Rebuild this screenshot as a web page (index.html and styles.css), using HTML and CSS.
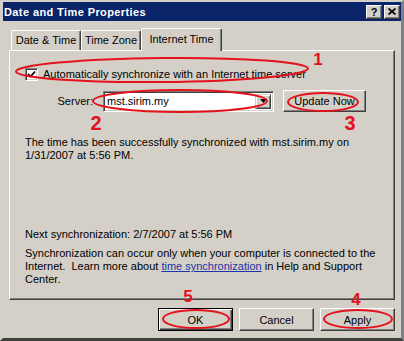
FILE: index.html
```html
<!DOCTYPE html>
<html lang="en">
<head>
    <meta charset="UTF-8">
    <meta name="viewport" content="width=device-width, initial-scale=1.0">
    <title>Date and Time Properties</title>
    <link rel="stylesheet" href="styles.css">
</head>
<body>

    <div class="window">
        <div class="titlebar">
            <span class="title">Date and Time Properties</span>
            <div class="caption-buttons">
                <span class="caption-btn help">?</span>
                <span class="caption-btn">
                    <svg width="8" height="7" viewBox="0 0 8 7"><path d="M0.5 0.5 L7.5 6.5 M7.5 0.5 L0.5 6.5" stroke="#000" stroke-width="1.7"/></svg>
                </span>
            </div>
        </div>

        <div class="content">
            <div class="tabs">
                <div class="tab tab-date">Date &amp; Time</div>
                <div class="tab tab-zone">Time Zone</div>
                <div class="tab tab-internet active">Internet Time</div>
            </div>

            <div class="panel">
                <label class="check-row">
                    <span class="checkbox">
                        <svg width="9" height="9" viewBox="0 0 9 9"><path d="M1 4 L3.5 6.5 L8 1.5" fill="none" stroke="#000" stroke-width="1.8"/></svg>
                    </span>
                    Automatically synchronize with an Internet time server
                </label>

                <div class="server-row">
                    <span class="server-label">Server:</span>
                    <div class="combo">
                        <span class="combo-text">mst.sirim.my</span>
                        <span class="combo-arrow">
                            <svg width="7" height="4" viewBox="0 0 7 4"><path d="M0 0 L7 0 L3.5 4 Z" fill="#000"/></svg>
                        </span>
                    </div>
                    <button type="button" class="btn update-btn">Update Now</button>
                </div>

                <p class="status">The time has been successfully synchronized with mst.sirim.my on<br>1/31/2007 at 5:56 PM.</p>

                <p class="next-sync">Next synchronization: 2/7/2007 at 5:56 PM</p>

                <p class="note">Synchronization can occur only when your computer is connected to the<br>Internet.&nbsp; Learn more about <a href="#" class="link">time synchronization</a> in Help and Support<br>Center.</p>
            </div>

            <div class="actions">
                <button type="button" class="btn default-btn">OK</button>
                <button type="button" class="btn">Cancel</button>
                <button type="button" class="btn">Apply</button>
            </div>
        </div>

        <!-- red annotation marks drawn over the dialog -->
        <svg class="marks" width="404" height="341" viewBox="0 0 404 341">
            <g fill="none" stroke="#e3121b" stroke-width="2">
                <ellipse cx="162" cy="70" rx="146" ry="12" transform="rotate(-0.6 162 70)"/>
                <ellipse cx="180" cy="101" rx="87" ry="11"/>
                <ellipse cx="323" cy="102" rx="35" ry="9"/>
                <ellipse cx="196" cy="319" rx="33" ry="9"/>
                <ellipse cx="358" cy="319" rx="34" ry="9"/>
            </g>
            <g fill="#e3121b" font-family="Liberation Sans, Arial, sans-serif" font-weight="700" text-anchor="middle">
                <text x="318" y="65" font-size="17">1</text>
                <text x="96" y="130" font-size="20">2</text>
                <text x="350" y="130" font-size="20">3</text>
                <text x="356" y="305" font-size="17">4</text>
                <text x="188" y="302" font-size="17">5</text>
            </g>
        </svg>
    </div>

</body>
</html>
```

FILE: styles.css
```css
body {
    margin: 0;
    background-color: #d4d0c8;
    font-family: "Liberation Sans", Arial, sans-serif;
    font-size: 11px;
    color: #000;
}
.window {
    position: relative;
    width: 404px;
    height: 341px;
    box-sizing: border-box;
    background-color: #d4d0c8;
    border-style: solid;
    border-width: 2px 3px 3px 3px;
    border-color: #d4d0c8 #808080 #404040 #d4d0c8;
    display: flex;
    flex-direction: column;
}
.titlebar {
    height: 19px;
    background-color: #0a246a;
    display: flex;
    align-items: center;
    justify-content: space-between;
    padding: 0 1px 0 1px;
}
.title {
    color: #fff;
    font-weight: bold;
    font-size: 11px;
    letter-spacing: 0.4px;
}
.caption-buttons {
    display: flex;
    gap: 2px;
}
.caption-btn {
    width: 16px;
    height: 14px;
    box-sizing: border-box;
    background-color: #d4d0c8;
    border: 1px solid;
    border-color: #fff #404040 #404040 #fff;
    box-shadow: inset -1px -1px #808080;
    display: flex;
    align-items: center;
    justify-content: center;
    font-weight: bold;
    font-size: 11px;
    line-height: 12px;
}
.content {
    flex: 1;
    display: flex;
    flex-direction: column;
    padding: 7px 6px 7px 6px;
}
.tabs {
    display: flex;
    height: 22px;
    padding-left: 2px;
    position: relative;
    z-index: 1;
}
.tab {
    box-sizing: border-box;
    height: 20px;
    margin-top: 2px;
    border: 1px solid;
    border-bottom: none;
    border-color: #fff #404040 transparent #fff;
    box-shadow: inset -1px 0 #808080;
    border-radius: 2px 2px 0 0;
    text-align: center;
    line-height: 18px;
}
.tab-date {
    width: 70px;
}
.tab-zone {
    width: 60px;
}
.tab-internet {
    width: 81px;
}
.tab.active {
    height: 23px;
    margin-top: 0;
    line-height: 20px;
    background-color: #d4d0c8;
}
.panel {
    height: 250px;
    box-sizing: border-box;
    border: 1px solid;
    border-color: #fff #404040 #404040 #fff;
    box-shadow: inset -1px -1px #808080;
    padding: 16px 8px 0 15px;
    white-space: nowrap;
}
.check-row {
    display: flex;
    align-items: center;
    gap: 5px;
    height: 14px;
}
.checkbox {
    width: 13px;
    height: 13px;
    box-sizing: border-box;
    background-color: #fff;
    border: 1px solid;
    border-color: #808080 #fff #fff #808080;
    box-shadow: inset 1px 1px #404040, inset -1px -1px #d4d0c8;
    display: flex;
    align-items: center;
    justify-content: center;
}
.server-row {
    display: flex;
    align-items: center;
    margin-top: 9px;
    height: 22px;
}
.server-label {
    width: 68px;
    text-align: right;
    margin-right: 10px;
}
.combo {
    width: 171px;
    height: 21px;
    box-sizing: border-box;
    background-color: #fff;
    border: 1px solid;
    border-color: #808080 #fff #fff #808080;
    box-shadow: inset 1px 1px #404040, inset -1px -1px #d4d0c8;
    display: flex;
    align-items: center;
    padding: 2px;
}
.combo-text {
    flex: 1;
    padding-left: 1px;
}
.combo-arrow {
    width: 16px;
    height: 15px;
    box-sizing: border-box;
    background-color: #d4d0c8;
    border: 1px solid;
    border-color: #d4d0c8 #404040 #404040 #d4d0c8;
    box-shadow: inset 1px 1px #fff, inset -1px -1px #808080;
    display: flex;
    align-items: center;
    justify-content: center;
}
.btn {
    height: 23px;
    width: 75px;
    box-sizing: border-box;
    background-color: #d4d0c8;
    border: 1px solid;
    border-color: #fff #404040 #404040 #fff;
    box-shadow: inset -1px -1px #808080;
    font-family: "Liberation Sans", Arial, sans-serif;
    font-size: 11px;
    color: #000;
    padding: 0;
}
.update-btn {
    width: 83px;
    height: 22px;
    margin-left: 9px;
}
.default-btn {
    border: 1px solid #000;
    box-shadow: inset 1px 1px #fff, inset -1px -1px #404040, inset -2px -2px #808080;
}
p {
    margin: 0;
    line-height: 13px;
}
.status {
    margin-top: 24px;
}
.next-sync {
    margin-top: 66px;
}
.note {
    margin-top: 6px;
}
.link {
    color: #1a35a8;
    text-decoration: underline;
}
.actions {
    display: flex;
    justify-content: flex-end;
    gap: 6px;
    margin-top: 8px;
}
.marks {
    position: absolute;
    left: -3px;
    top: -2px;
    pointer-events: none;
}
```
